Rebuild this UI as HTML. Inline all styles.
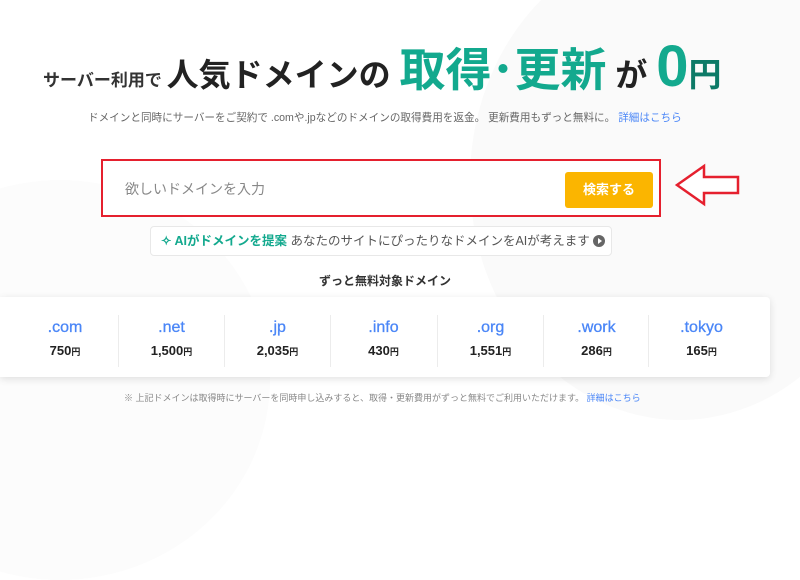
<!DOCTYPE html>
<html><head><meta charset="utf-8"><style>
*{margin:0;padding:0;box-sizing:border-box}
body{width:800px;height:413px;overflow:hidden;background:#fff;font-family:"Liberation Sans","Noto Sans CJK JP",sans-serif;position:relative;color:#333}
.bg1{position:absolute;left:470px;top:-60px;width:420px;height:480px;border-radius:50%;background:#fafafa}
.bg2{position:absolute;left:-150px;top:180px;width:420px;height:400px;border-radius:50%;background:#fcfcfc}
.abs{position:absolute;white-space:nowrap}
h1{position:absolute;left:43px;top:42px;white-space:nowrap;font-weight:bold;line-height:50px;letter-spacing:0}
.s1{font-size:17px;color:#333}
.s2{font-size:32px;color:#222}
.s3{font-size:46px;color:#13a98e}
.s4{font-size:58px;color:#13a98e;font-family:"Liberation Sans",sans-serif}
.s5{font-size:33px;color:#0d7a67}
.sub{left:88px;top:110px;font-size:10.6px;color:#666}
a{color:#4a86f7;text-decoration:none}
.box{position:absolute;left:101px;top:159px;width:560px;height:58px;border:2px solid #e5202e;background:#fff}
.ph{left:22px;top:18px;font-size:14px;color:#888}
.btn{position:absolute;left:462px;top:11px;width:88px;height:36px;background:#fbb500;border-radius:3px;color:#fff;font-size:13px;font-weight:bold;text-align:center;line-height:36px}
.ai{position:absolute;left:150px;top:226px;width:462px;height:30px;border:1px solid #e8e8e8;border-radius:4px;background:#fff;font-size:12.5px;line-height:28px;padding-left:10px;color:#555}
.ai b{color:#13a98e}
.play{position:absolute;right:6px;top:8px;width:12px;height:12px;border-radius:50%;background:#666}
.play:after{content:"";position:absolute;left:4.5px;top:3px;border-left:4px solid #fff;border-top:3px solid transparent;border-bottom:3px solid transparent}
.ttl{left:0;width:770px;text-align:center;top:272px;font-size:12px;font-weight:bold;color:#333}
.card{position:absolute;left:0;top:297px;width:770px;height:80px;background:#fff;border-radius:0 4px 4px 0;box-shadow:0 2px 8px rgba(0,0,0,.12)}
.col{position:absolute;top:18px;width:106px;height:52px;text-align:center;padding-top:3px}
.col+.col{border-left:1px solid #ececec}
.d{font-size:16px;color:#4a86f7;line-height:20px;-webkit-text-stroke:0.3px #4a86f7}
.p{font-size:13px;font-weight:bold;color:#222;margin-top:5px}
.p small{font-size:9px}
.note{left:124px;top:391px;font-size:9px;color:#888}
</style></head><body>
<div class="bg1"></div><div class="bg2"></div>
<h1><span class="s1">サーバー利用で </span><span class="s2">人気ドメインの </span><span class="s3">取得･更新</span><span class="s2"> が </span><span class="s4">0</span><span class="s5">円</span></h1>
<div class="abs sub">ドメインと同時にサーバーをご契約で .comや.jpなどのドメインの取得費用を返金。 更新費用もずっと無料に。 <a>詳細はこちら</a></div>
<div class="box"><div class="abs ph">欲しいドメインを入力</div><div class="btn">検索する</div></div>
<svg class="abs" style="left:674px;top:163px" width="68" height="44"><path d="M3 22 L30 3 L30 14 L64 14 L64 30 L30 30 L30 41 Z" fill="#fff" stroke="#e5202e" stroke-width="2.5" stroke-linejoin="miter"/></svg>
<div class="ai"><b>✧ AIがドメインを提案</b> あなたのサイトにぴったりなドメインをAIが考えます<span class="play"></span></div>
<div class="abs ttl">ずっと無料対象ドメイン</div>
<div class="card">
<div class="col" style="left:12px"><div class="d">.com</div><div class="p">750<small>円</small></div></div>
<div class="col" style="left:118px"><div class="d">.net</div><div class="p">1,500<small>円</small></div></div>
<div class="col" style="left:224px"><div class="d">.jp</div><div class="p">2,035<small>円</small></div></div>
<div class="col" style="left:330px"><div class="d">.info</div><div class="p">430<small>円</small></div></div>
<div class="col" style="left:437px"><div class="d">.org</div><div class="p">1,551<small>円</small></div></div>
<div class="col" style="left:543px"><div class="d">.work</div><div class="p">286<small>円</small></div></div>
<div class="col" style="left:648px"><div class="d">.tokyo</div><div class="p">165<small>円</small></div></div>
</div>
<div class="abs note">※ 上記ドメインは取得時にサーバーを同時申し込みすると、取得・更新費用がずっと無料でご利用いただけます。 <a>詳細はこちら</a></div>
</body></html>
